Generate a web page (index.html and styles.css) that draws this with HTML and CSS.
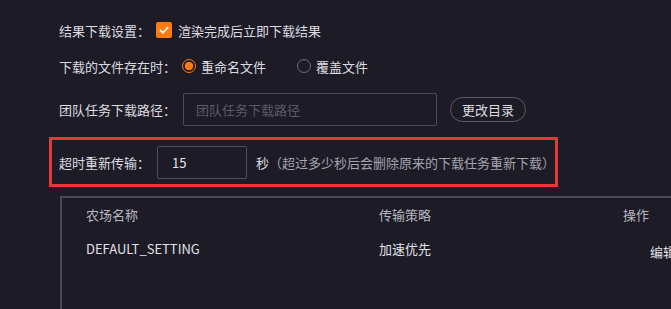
FILE: index.html
```html
<!DOCTYPE html>
<html lang="zh">
<head>
<meta charset="utf-8">
<link rel="stylesheet" href="styles.css">
</head>
<body>
<div class="page">
  <div class="row row-1">
    <span class="label">结果下载设置：</span>
    <span class="checkbox"><svg viewBox="0 0 16 16" width="16" height="16"><path d="M4.3 8.2 L7 10.8 L11.8 5.6" fill="none" stroke="#fff" stroke-width="1.6" stroke-linecap="round" stroke-linejoin="round"/></svg></span>
    <span class="opt">渲染完成后立即下载结果</span>
  </div>
  <div class="row row-2">
    <span class="label">下载的文件存在时：</span>
    <span class="radio on"></span>
    <span class="opt">重命名文件</span>
    <span class="radio off"></span>
    <span class="opt">覆盖文件</span>
  </div>
  <div class="row row-3">
    <span class="label">团队任务下载路径：</span>
    <div class="input path">团队任务下载路径</div>
    <button class="btn">更改目录</button>
  </div>
  <div class="highlight">
    <span class="label">超时重新传输：</span>
    <div class="input num">15</div>
    <span class="unit">秒</span>
    <span class="hint">（超过多少秒后会删除原来的下载任务重新下载）</span>
  </div>
  <div class="table">
    <div class="thead">
      <span>农场名称</span>
      <span>传输策略</span>
      <span>操作</span>
    </div>
    <div class="trow">
      <span class="name">DEFAULT_SETTING</span>
      <span>加速优先</span>
      <span class="edit">编辑</span>
    </div>
  </div>
</div>
</body>
</html>
```

FILE: styles.css
```css
html, body {
  margin: 0;
  padding: 0;
  background: #1c1b26;
  overflow: hidden;
}
body {
  width: 671px;
  height: 309px;
  font-family: "Noto Sans CJK SC", "Noto Sans", sans-serif;
  font-size: 13px;
  color: #dcdce0;
}
.page {
  padding: 20px 0 0 59px;
}
.row {
  display: flex;
  align-items: center;
  white-space: nowrap;
}
.row-1 { height: 20px; }
.row-2 { height: 20px; margin-top: 16px; }
.row-3 { height: 33px; margin-top: 17px; }
.label {
  flex: none;
  margin-right: 6px;
}
.checkbox {
  width: 16px;
  height: 16px;
  border-radius: 2px;
  background: #ff7b0f;
  display: inline-flex;
  margin-right: 6px;
}
.radio {
  box-sizing: border-box;
  width: 14px;
  height: 14px;
  border-radius: 50%;
  margin-right: 5px;
}
.radio.on {
  border: 1.5px solid #ff7b0f;
  background: radial-gradient(circle, #ff7b0f 0 4px, transparent 4.5px);
}
.radio.off {
  border: 1px solid #6b6a76;
  margin-left: 31px;
}
.input {
  box-sizing: border-box;
  height: 33px;
  border: 1px solid #4c4b57;
  border-radius: 2px;
  display: flex;
  align-items: center;
}
.input.path {
  width: 254px;
  padding-left: 12px;
  color: #5b5a66;
  margin-left: 1px;
}
.btn {
  margin-left: 13px;
  box-sizing: border-box;
  width: 76px;
  height: 25px;
  border: 1px solid #5c5b67;
  border-radius: 13px;
  background: transparent;
  color: #dcdce0;
  font: inherit;
  font-size: 13px;
  padding: 0;
}
.highlight {
  box-sizing: border-box;
  margin: 11px 0 0 -10px;
  width: 509px;
  height: 50px;
  border: 3px solid #e8363b;
  display: flex;
  align-items: center;
  padding-left: 7px;
  white-space: nowrap;
}
.highlight .label { margin-right: 7px; }
.input.num {
  width: 93px;
  padding-left: 14px;
  color: #e4e4e8;
  border-color: #4f4e5a;
}
.unit {
  margin-left: 9px;
  color: #dcdce0;
}
.hint {
  color: #a4a3ad;
}
.table {
  box-sizing: border-box;
  margin-top: 9px;
  margin-left: 1px;
  height: 114px;
  border-top: 2px solid #4a4954;
  border-left: 2px solid #4a4954;
  overflow: hidden;
}
.thead, .trow {
  display: grid;
  grid-template-columns: 293px 244px 60px;
  padding-left: 24px;
  white-space: nowrap;
}
.thead {
  padding-top: 7px;
  height: 20px;
  line-height: 20px;
  color: #b8b7c0;
}
.trow {
  margin-top: 14px;
  line-height: 20px;
  color: #e2e2e6;
}
.edit {
  padding-left: 27px;
  padding-top: 3px;
}
```
